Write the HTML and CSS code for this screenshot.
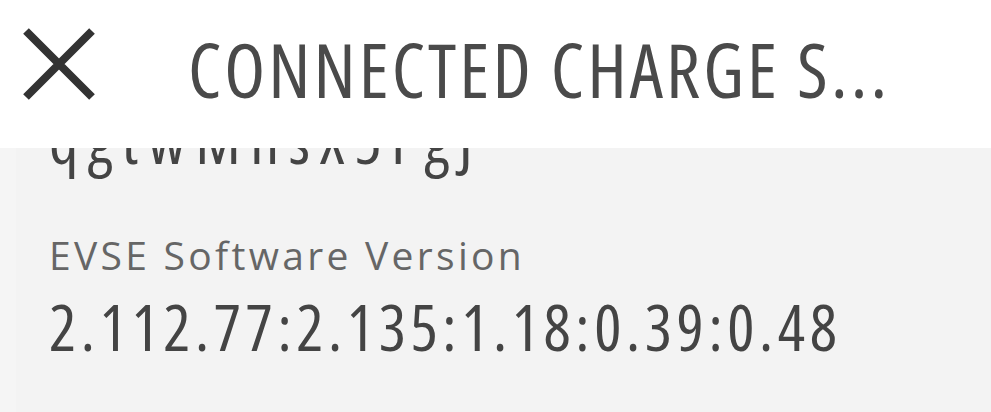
FILE: index.html
```html
<!DOCTYPE html>
<html>
<head>
    <title>Connected Charge Station</title>
    <link rel="stylesheet" href="styles.css">
</head>
<body>
    <div class="header">
        <div class="close-btn">
            <svg width="72" height="72" viewBox="0 0 72 72">
                <path d="M3 3 L69 69 M69 3 L3 69" stroke="#333" stroke-width="8" fill="none"/>
            </svg>
        </div>
        <h1 class="title">CONNECTED CHARGE S...</h1>
    </div>

    <div class="content">
        <div class="details">
            <div class="field first">
                <div class="field-value serial">qgtwMnsX5FgJ</div>
            </div>
            <div class="field">
                <div class="field-label">EVSE Software Version</div>
                <div class="field-value">2.112.77:2.135:1.18:0.39:0.48</div>
            </div>
        </div>
    </div>
</body>
</html>
```

FILE: styles.css
```css
body {
    margin: 0;
    width: 991px;
    height: 412px;
    overflow: hidden;
    background: #f5f5f5;
    font-family: "Open Sans", sans-serif;
}
.header {
    display: flex;
    align-items: flex-start;
    height: 148px;
    background: white;
    position: relative;
    z-index: 1;
}
.close-btn {
    width: 72px;
    height: 72px;
    margin: 28px 0 0 23px;
}
.close-btn svg { display: block; }
.title {
    margin: 18px 0 0 93px;
    font-family: "Open Sans", sans-serif;
    font-stretch: 87%;
    font-weight: normal;
    font-size: 75px;
    line-height: 102px;
    letter-spacing: 3.1px;
    color: #4a4a4a;
    white-space: nowrap;
}
.content {
    height: 264px;
    overflow: hidden;
    margin-left: 16px;
    background: #f3f3f3;
}
.details {
    padding-left: 33px;
}
.field.first {
    margin-top: -46px;
}
.field + .field {
    margin-top: 53px;
}
.field-label {
    font-size: 39px;
    letter-spacing: 3.3px;
    color: #666;
    line-height: 48px;
    margin-bottom: 10px;
}
.field-value {
    font-stretch: 80%;
    font-size: 64px;
    letter-spacing: 4.6px;
    color: #444;
    line-height: 76px;
    white-space: nowrap;
}
.field-value.serial {
    letter-spacing: 9.5px;
}
```
